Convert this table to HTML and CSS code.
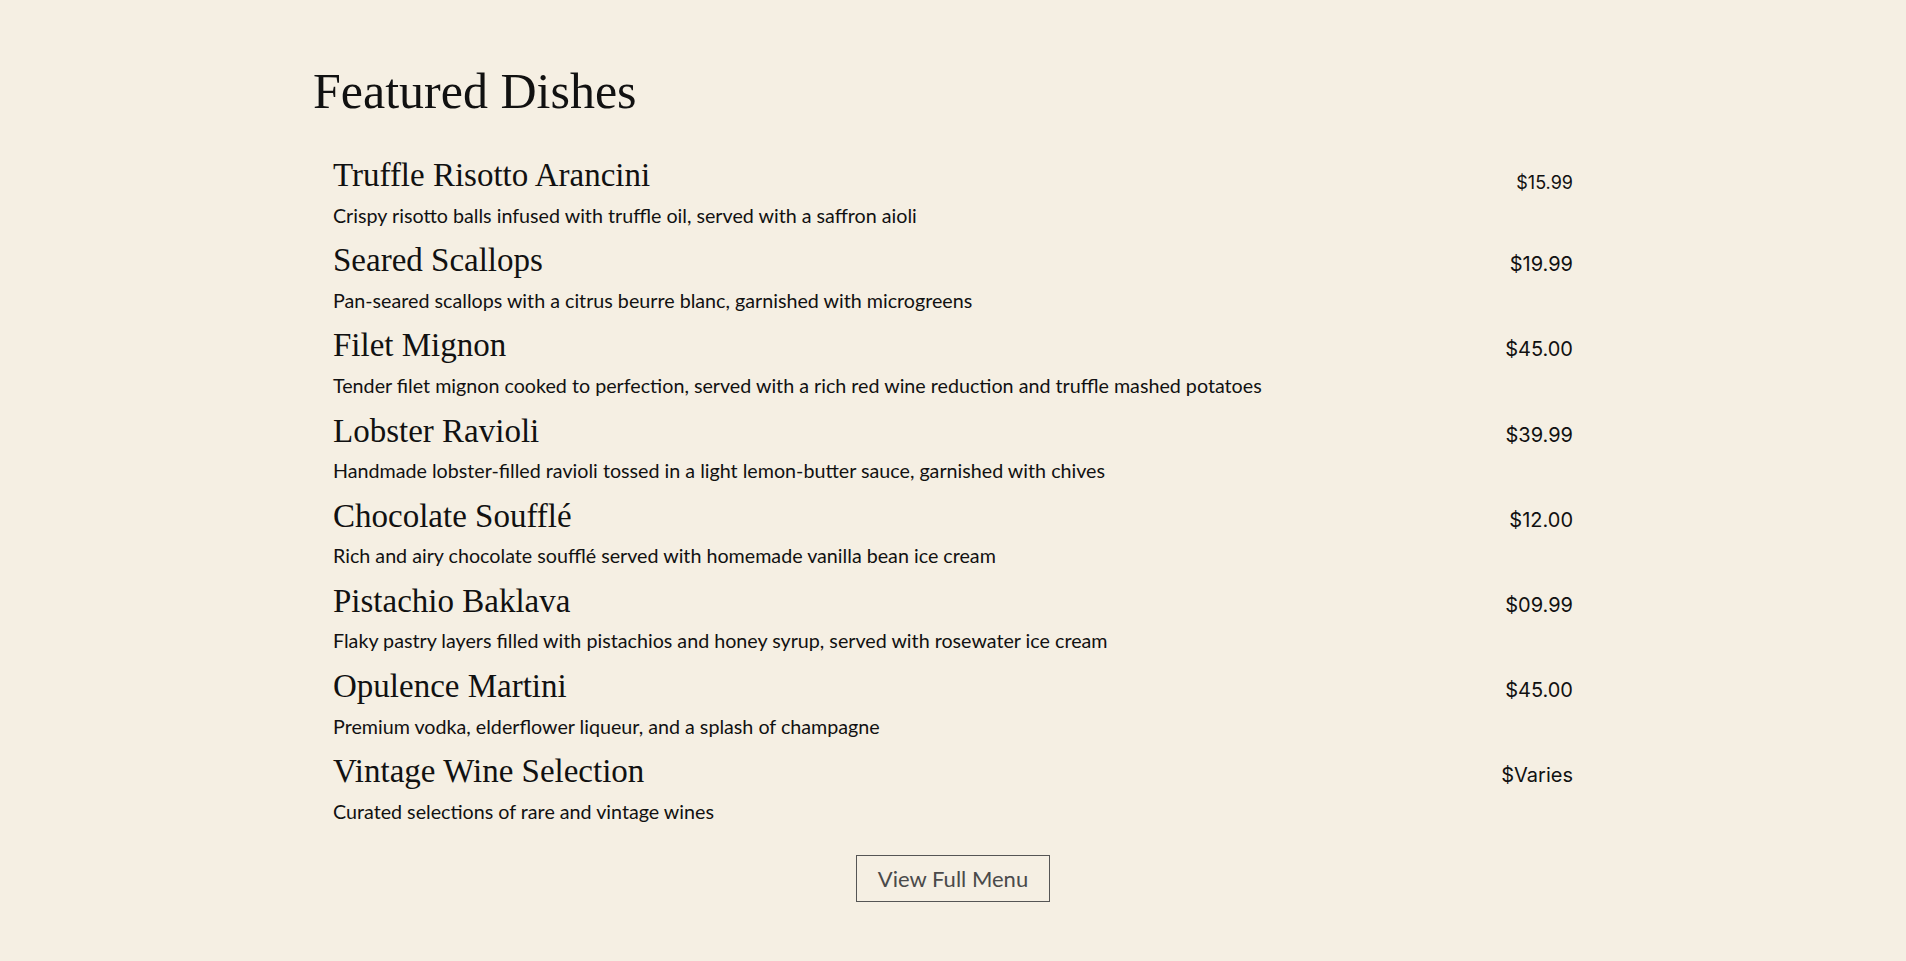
FILE: index.html
```html
<!DOCTYPE html>
<html lang="en">
<head>
<meta charset="utf-8">
<title>Featured Dishes</title>
<link rel="stylesheet" href="styles.css">
</head>
<body>
<section class="menu">
  <h2 class="menu-title">Featured Dishes</h2>
  <ul class="dish-list">
    <li class="dish">
      <div class="dish-info">
        <h3 class="dish-name">Truffle Risotto Arancini</h3>
        <p class="dish-desc">Crispy risotto balls infused with truffle oil, served with a saffron aioli</p>
      </div>
      <span class="dish-price dish-price-small">$15.99</span>
    </li>
    <li class="dish">
      <div class="dish-info">
        <h3 class="dish-name">Seared Scallops</h3>
        <p class="dish-desc">Pan-seared scallops with a citrus beurre blanc, garnished with microgreens</p>
      </div>
      <span class="dish-price">$19.99</span>
    </li>
    <li class="dish">
      <div class="dish-info">
        <h3 class="dish-name">Filet Mignon</h3>
        <p class="dish-desc">Tender filet mignon cooked to perfection, served with a rich red wine reduction and truffle mashed potatoes</p>
      </div>
      <span class="dish-price">$45.00</span>
    </li>
    <li class="dish">
      <div class="dish-info">
        <h3 class="dish-name">Lobster Ravioli</h3>
        <p class="dish-desc">Handmade lobster-filled ravioli tossed in a light lemon-butter sauce, garnished with chives</p>
      </div>
      <span class="dish-price">$39.99</span>
    </li>
    <li class="dish">
      <div class="dish-info">
        <h3 class="dish-name">Chocolate Soufflé</h3>
        <p class="dish-desc">Rich and airy chocolate soufflé served with homemade vanilla bean ice cream</p>
      </div>
      <span class="dish-price">$12.00</span>
    </li>
    <li class="dish">
      <div class="dish-info">
        <h3 class="dish-name">Pistachio Baklava</h3>
        <p class="dish-desc">Flaky pastry layers filled with pistachios and honey syrup, served with rosewater ice cream</p>
      </div>
      <span class="dish-price">$09.99</span>
    </li>
    <li class="dish">
      <div class="dish-info">
        <h3 class="dish-name">Opulence Martini</h3>
        <p class="dish-desc">Premium vodka, elderflower liqueur, and a splash of champagne</p>
      </div>
      <span class="dish-price">$45.00</span>
    </li>
    <li class="dish">
      <div class="dish-info">
        <h3 class="dish-name">Vintage Wine Selection</h3>
        <p class="dish-desc">Curated selections of rare and vintage wines</p>
      </div>
      <span class="dish-price">$Varies</span>
    </li>
  </ul>
  <div class="menu-actions">
    <a class="menu-button" href="#">View Full Menu</a>
  </div>
</section>
</body>
</html>
```

FILE: styles.css
```css
html, body {
  margin: 0;
  padding: 0;
  background: #f5efe3;
  color: #111;
}

.menu {
  max-width: 1280px;
  margin: 0 auto;
  padding: 61px 0 40px;
}

.menu-title {
  margin: 0 0 35px;
  font-family: "Liberation Serif", "DejaVu Serif", serif;
  font-weight: 400;
  font-size: 50px;
  line-height: 1.2;
}

.dish-list {
  list-style: none;
  margin: 0;
  padding: 0;
}

.dish {
  display: flex;
  justify-content: space-between;
  align-items: baseline;
  padding: 0 20px;
  margin-bottom: 12px;
}

.dish-name {
  margin: 0;
  font-family: "Liberation Serif", "DejaVu Serif", serif;
  font-weight: 400;
  font-size: 33px;
  line-height: 1.2;
}

.dish-desc {
  margin: 6px 0 0;
  font-family: Lato, "Liberation Sans", sans-serif;
  font-size: 19.7px;
  line-height: 1.4;
}

.dish-price {
  font-family: Inter, "Liberation Sans", sans-serif;
  font-size: 20px;
}

.dish-price-small {
  align-self: flex-start;
  margin-top: 16px;
  font-size: 18px;
}

.menu-actions {
  display: flex;
  justify-content: center;
  margin-top: 30px;
}

.menu-button {
  display: inline-block;
  padding: 9px 21px;
  border: 1px solid #555;
  color: #4a4a4a;
  font-family: Lato, "Liberation Sans", sans-serif;
  font-size: 22px;
  text-decoration: none;
}
```
